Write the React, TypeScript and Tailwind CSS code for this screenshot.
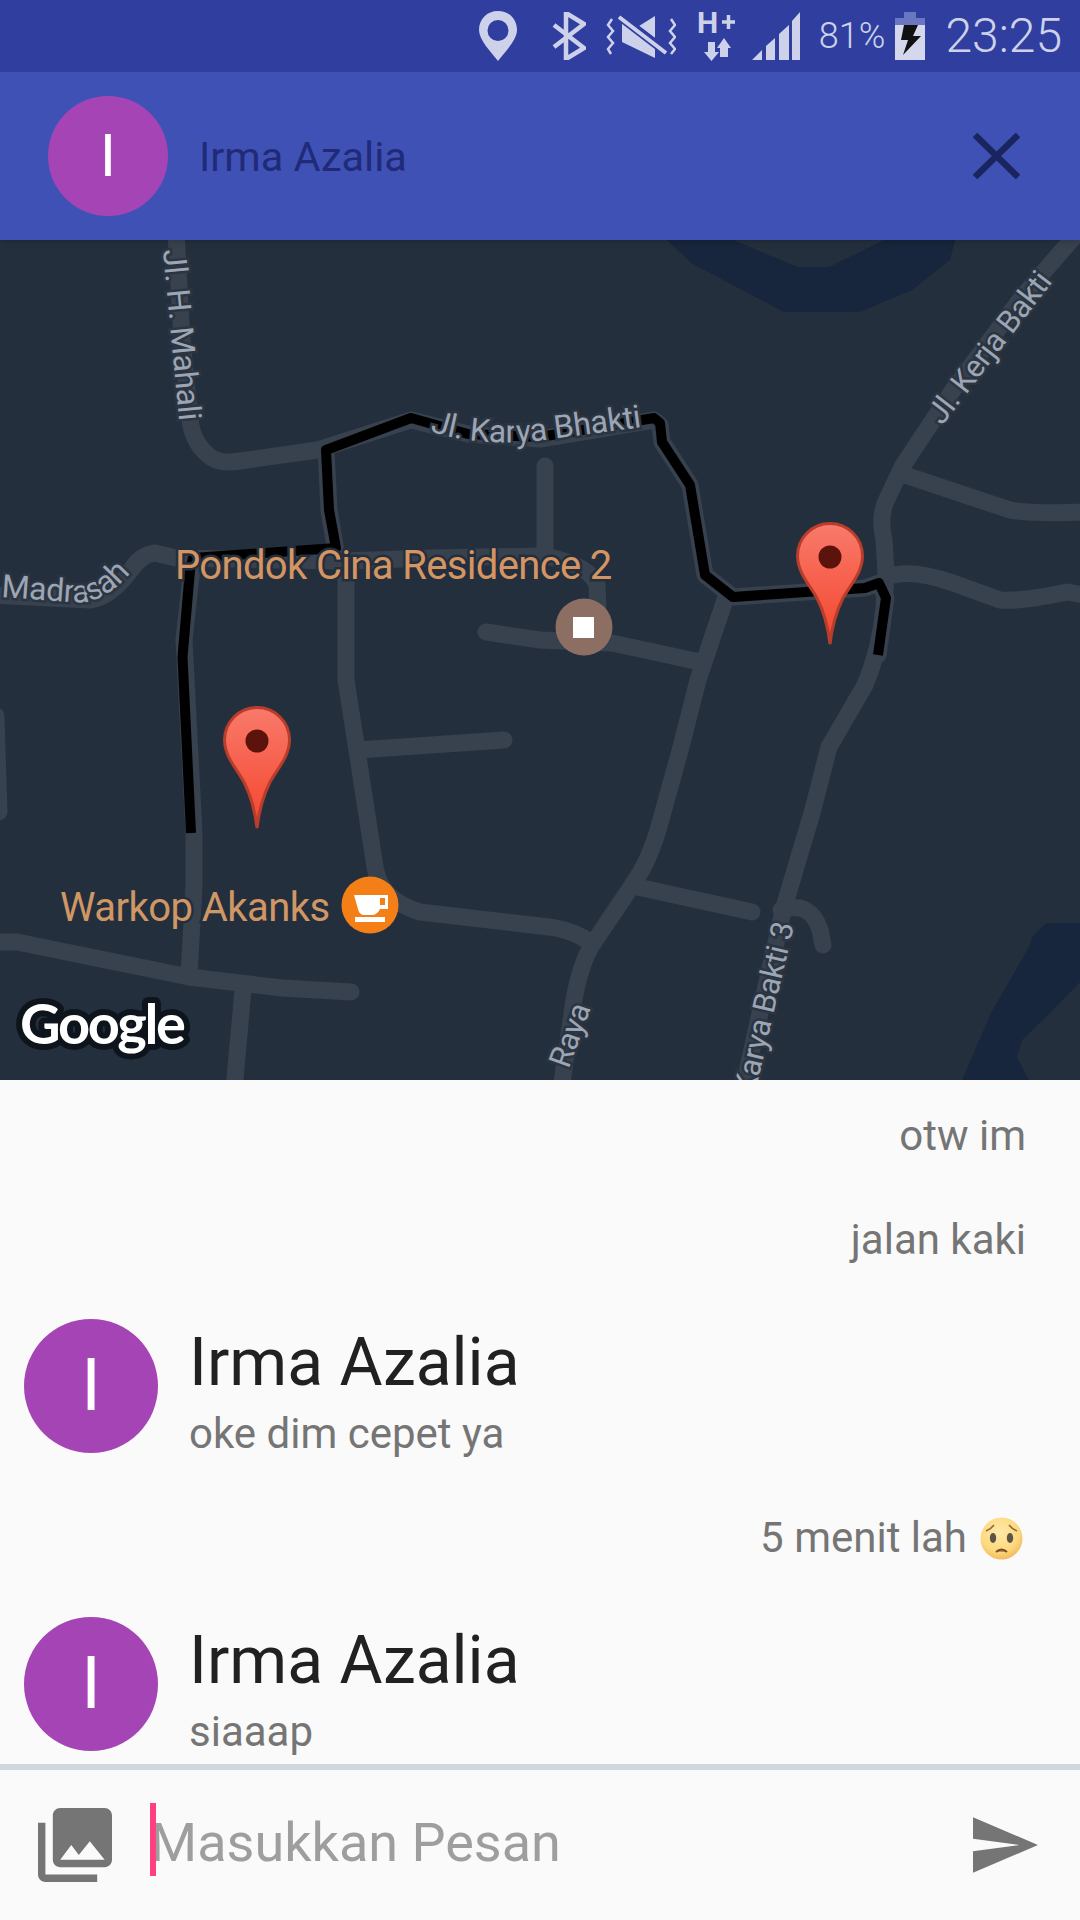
import React from "react";

const ROADS = [
  "M176 232 L182 340 L190 420 Q193 445 212 458 Q222 464 240 461 L317 450 L411 420 L468 434 L540 439 L654 420 L660 425 L662 442 L690 485 L705 575 L733 597 L865 588 L879 583 L886 598 L878 655",
  "M-10 595 L90 600 Q110 598 131 570 Q140 555 155 553 L176 558 L344 561 L430 558 L545 556 Q590 565 597 585 L598 610",
  "M545 466 L545 556",
  "M193 558 L184 640 L194 833 L194 887 L189 975",
  "M326 450 L329 510 L336 552",
  "M346 560 L346 680 L358 757 L375 867 Q380 900 420 912 L540 926 Q570 928 590 942",
  "M358 750 L504 740",
  "M486 632 L540 640 L612 643 L700 662",
  "M726 597 L698 680 L681 747 L660 823 Q650 860 633 884 L592 945 Q580 965 574 1000 L561 1090",
  "M633 886 L752 912",
  "M-10 942 L17 942 L189 977 L282 988 L351 992",
  "M243 990 L234 1090",
  "M1080 230 L1022 297 L953 390 L902 467 L888 497 Q878 515 884 540 L886 573 L884 607 Q880 650 865 685 L829 747 L812 813 L784 907 L760 1013 L743 1090",
  "M905 475 L1010 510 Q1030 514 1090 512",
  "M888 577 Q910 568 953 583 L1000 600 Q1020 602 1067 592 L1090 596",
  "M781 910 Q810 900 820 930 L823 945",
  "M-4 716 L-1 812",
];

const ROUTE =
  "M191 833 L182.5 657 L190 570 L193 558 L336 548 L329 510 L326 450 L411 418 L468 434 L540 437 L654 418 L660 423 L662 442 L690 485 L705 575 L733 597 L865 588 L879 583 L886 598 L878 655";

function Pin({ x, y }: { x: number; y: number }) {
  return (
    <g transform={`translate(${x} ${y})`}>
      <path
        d="M34 1.5C52 1.5 66.5 16 66.5 34C66.5 50 55 62 47 76C41 88 36 105 34 122C32 105 27 88 21 76C13 62 1.5 50 1.5 34C1.5 16 16 1.5 34 1.5Z"
        fill="url(#pinFill)"
        stroke="#b83d2b"
        strokeWidth="3"
      />
      <circle cx="34" cy="35" r="11.5" fill="#5c130b" />
    </g>
  );
}

function MapView() {
  const road = { fontFamily: "Roboto, sans-serif", fill: "#9ca5b3", stroke: "#2b3441", strokeWidth: 5, paintOrder: "stroke", letterSpacing: "-0.4px" } as const;
  const place = { fontFamily: "Roboto, sans-serif", stroke: "#242f3e", strokeWidth: 5, paintOrder: "stroke" } as const;
  return (
    <div className="h-[840px] w-full overflow-hidden bg-[#242f3e]">
      <svg width="1080" height="840" viewBox="0 240 1080 840" className="block">
        <defs>
          <linearGradient id="pinFill" x1="0" y1="0" x2="0" y2="1">
            <stop offset="0" stopColor="#f97a6b" />
            <stop offset="1" stopColor="#f4452c" />
          </linearGradient>
          <path id="madrasahPath" d="M1 597 L70 602 C95 606 118 592 142 558" />
          <path id="bhaktiPath" d="M430 431 Q470 445 530 442 L650 426" />
        </defs>
        <path d="M667 240 L691 263 L784 312 L860 312 L912 290 L950 260 L955 240 L884 240 L829 267 L798 267 L733 240 Z" fill="#17263c" />
        <path d="M1046 923 L1080 923 L1080 982 L1046 1017 L1022 1040 L1017 1057 L1029 1080 L962 1080 L991 1013 L1029 947 L1032 937 Z" fill="#17263c" />
        {ROADS.map((d, i) => (
          <path key={i} d={d} fill="none" stroke="#38414e" strokeWidth="17" strokeLinecap="round" strokeLinejoin="round" />
        ))}
        <path d={ROUTE} fill="none" stroke="#000" strokeWidth="10" strokeLinejoin="round" />

        <text transform="translate(163 250) rotate(84.6)" fontSize="32" {...road}>Jl. H. Mahali</text>
        <text fontSize="32" {...road}><textPath href="#madrasahPath">Madrasah</textPath></text>
        <text fontSize="32" {...road}><textPath href="#bhaktiPath">Jl. Karya Bhakti</textPath></text>
        <text transform="translate(942 426) rotate(-52.5)" fontSize="31" {...road}>Jl. Kerja Bakti</text>
        <text transform="translate(794 925) rotate(-77)" fontSize="31" textAnchor="end" {...road}>Jl. Karya Bakti 3</text>
        <text transform="translate(591 1008) rotate(-70)" fontSize="31" textAnchor="end" {...road}>Raya</text>

        <text x="175" y="579" fontSize="40" letterSpacing="-0.65" fill="#d59563" {...place}>Pondok Cina Residence 2</text>
        <text x="60" y="921" fontSize="40" letterSpacing="-0.55" fill="#d09764" {...place}>Warkop Akanks</text>

        <circle cx="584" cy="627" r="28.5" fill="#8d6e63" />
        <rect x="573" y="617" width="21" height="21" fill="#fff" />
        <circle cx="370" cy="905" r="28.5" fill="#f57f17" />
        <path d="M354 895H388V909H380C378 913 375 915 372 915H365C361 915 359 913 358 909Z" fill="#fff" />
        <rect x="380" y="898" width="5" height="7" fill="#f57f17" />
        <rect x="355" y="917" width="30" height="5" fill="#fff" />

        <Pin x={223} y={706} />
        <Pin x={796} y={522} />

        <text x="20" y="1044" fontSize="56" fontWeight="700" letterSpacing="-2.4" fill="#fff" stroke="#0e141c" strokeWidth="12" strokeLinejoin="round" style={{ fontFamily: "Lato, sans-serif", paintOrder: "stroke" }}>Google</text>
      </svg>
    </div>
  );
}

function StatusBar() {
  const c = "#cdd2ea";
  return (
    <div className="flex h-[72px] items-center justify-end bg-[#303f9f] pr-[18px] text-[#cdd2ea]">
      <svg width="38" height="50" viewBox="0 0 38 50">
        <path fillRule="evenodd" d="M19 0C30 0 38 8 38 19C38 29 26 41 19 50C12 41 0 29 0 19C0 8 8 0 19 0ZM19 9A10.5 10.5 0 1 0 19 30A10.5 10.5 0 1 0 19 9Z" fill={c} />
      </svg>
      <svg className="ml-[35px]" width="34" height="48" viewBox="0 0 34 48">
        <path d="M2 13L32 36L14 47V1L32 12L2 35" fill="none" stroke={c} strokeWidth="4.5" />
      </svg>
      <svg className="ml-[20px]" width="70" height="44" viewBox="0 0 70 44" fill="none">
        <path d="M16 4V28L49 44V30ZM49 2V24L33 12Z" fill={c} />
        <path d="M13 2L60 38" stroke="#303f9f" strokeWidth="9" />
        <path d="M13 3L60 39" stroke={c} strokeWidth="4" />
        <path d="M6 5L2 11L7 17L2 23L7 29L2 35L5 40M65 5L69 11L64 17L69 23L64 29L69 35L65 40" stroke={c} strokeWidth="2.5" />
      </svg>
      <svg className="ml-[22px]" width="37" height="52" viewBox="0 0 37 52">
        <text x="-1" y="23" fontSize="30" fontWeight="700" fill={c} style={{ fontFamily: "Roboto, sans-serif" }}>H</text>
        <path d="M24 12H37M30.5 5V19" stroke={c} strokeWidth="3.5" />
        <path d="M10 32H17V42H21L13.5 51L6 42H10ZM22 47V38H19L26 28L33 38H30V47Z" fill={c} />
      </svg>
      <svg className="ml-[17px]" width="48" height="48" viewBox="0 0 48 48">
        <path d="M0 48L10 38V48ZM14 34L23 26V48H14ZM27 22L37 13V48H27ZM40 9L48 0V48H40Z" fill={c} />
      </svg>
      <span className="ml-[19px] text-[36px] leading-none font-light">81%</span>
      <svg className="ml-[10px]" width="30" height="48" viewBox="0 0 30 48">
        <rect x="9" y="0" width="12" height="7" fill="#6a76bf" />
        <rect x="0" y="6" width="30" height="9" fill="#6a76bf" />
        <rect x="0" y="13" width="30" height="35" fill="#d5d8ec" />
        <path d="M9 13H23L18 24H26L8 43L13 28H6Z" fill="#111" />
      </svg>
      <span className="ml-[20px] text-[48px] leading-none font-light">23:25</span>
    </div>
  );
}

function Avatar({ size, fontSize }: { size: string; fontSize: string }) {
  return (
    <div className={`flex shrink-0 items-center justify-center rounded-full bg-[#a545b5] font-normal text-white ${size} ${fontSize}`}>
      I
    </div>
  );
}

function Mine({ children, mt }: { children: React.ReactNode; mt: string }) {
  return (
    <div className={`flex h-[50px] items-center justify-end pr-[54px] text-[42px] leading-[50px] text-[#757575] ${mt}`}>
      {children}
    </div>
  );
}

function Theirs({ text, mt }: { text: string; mt: string }) {
  return (
    <div className={`flex h-[134px] shrink-0 pl-[24px] ${mt}`}>
      <Avatar size="h-[134px] w-[134px]" fontSize="text-[72px]" />
      <div className="ml-[31px] flex flex-col">
        <span className="mt-[6px] text-[66px] leading-[76px] text-[#212121]">Irma Azalia</span>
        <span className="mt-[8px] text-[42px] leading-[50px] text-[#757575]">{text}</span>
      </div>
    </div>
  );
}

function SadFace() {
  return (
    <svg className="mr-[3px] ml-[13px]" width="43" height="43" viewBox="0 0 43 43">
      <defs>
        <radialGradient id="face" cx="0.45" cy="0.35" r="0.7">
          <stop offset="0" stopColor="#ffe9a8" />
          <stop offset="0.65" stopColor="#fdd97e" />
          <stop offset="1" stopColor="#f0b455" />
        </radialGradient>
      </defs>
      <circle cx="21.5" cy="21.5" r="21" fill="url(#face)" />
      <ellipse cx="13" cy="21" rx="3.2" ry="5" fill="#5d5347" />
      <ellipse cx="30" cy="21" rx="3.2" ry="5" fill="#5d5347" />
      <path d="M6 14Q11 12 14 8M37 14Q32 12 29 8" stroke="#8a6d3b" strokeWidth="1.6" fill="none" />
      <path d="M16 35Q21.5 30 27 35" stroke="#7a4b2a" strokeWidth="2" fill="#c98a50" />
    </svg>
  );
}

export default function App() {
  return (
    <div className="flex h-[1920px] w-[1080px] flex-col overflow-hidden bg-[#fafafa] font-['Roboto',sans-serif]">
      <div className="relative z-10 shadow-md">
        <StatusBar />
        <div className="flex h-[168px] items-center bg-[#3f51b5] pr-[60px] pl-[48px]">
          <Avatar size="h-[120px] w-[120px]" fontSize="text-[60px]" />
          <span className="mt-[2px] ml-[31px] flex-1 text-[41.5px] text-[#1f2a78]">Irma Azalia</span>
          <svg width="47" height="46" viewBox="0 0 47 46">
            <path d="M2 2L45 44M45 2L2 44" stroke="#1a2560" strokeWidth="6.5" />
          </svg>
        </div>
      </div>
      <MapView />
      <div className="flex h-[684px] flex-col overflow-hidden">
        <Mine mt="mt-[31px]">otw im</Mine>
        <Mine mt="mt-[54px]">jalan kaki</Mine>
        <Theirs text="oke dim cepet ya" mt="mt-[54px]" />
        <Mine mt="mt-[60px]">
          5 menit lah
          <SadFace />
        </Mine>
        <Theirs text="siaaap" mt="mt-[54px]" />
      </div>
      <div className="h-[6px] bg-[#cfd8dc]" />
      <div className="flex flex-1 items-center pr-[42px] pl-[38px]">
        <svg width="74" height="74" viewBox="2 2 20 20">
          <path fill="#757575" d="M22 16V4c0-1.1-.9-2-2-2H8c-1.1 0-2 .9-2 2v12c0 1.1.9 2 2 2h12c1.1 0 2-.9 2-2zm-11-4l2.03 2.71L16 11l4 5H8l3-4zM2 6v14c0 1.1.9 2 2 2h14v-2H4V6H2z" />
        </svg>
        <div className="relative mb-[4px] ml-[38px] flex-1 text-[54px] leading-[64px] text-[#9e9e9e]">
          <div className="absolute top-[-8px] left-0 h-[73px] w-[6px] bg-[#ff4081]" />
          Masukkan Pesan
        </div>
        <svg width="65" height="56" viewBox="2 3 21 18">
          <path fill="#757575" d="M2.01 21L23 12 2.01 3 2 10l15 2-15 2z" />
        </svg>
      </div>
    </div>
  );
}
